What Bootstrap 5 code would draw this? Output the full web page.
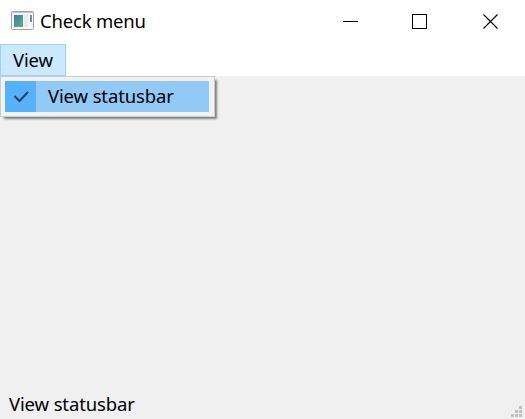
<!DOCTYPE html>
<html lang="en">
<head>
<meta charset="utf-8">
<meta name="viewport" content="width=device-width, initial-scale=1">
<title>Check menu</title>
<link href="https://cdn.jsdelivr.net/npm/bootstrap@5.3.0/dist/css/bootstrap.min.css" rel="stylesheet">
<style>
body{font-family:"Noto Sans","Open Sans",sans-serif;font-size:18.5px;line-height:30px;color:#000;background:#f0f0f0;letter-spacing:-.13px}
svg{display:block;flex:none}
.title-bar{height:44px;padding-left:10px;padding-right:26px}
.title-icon{margin-bottom:3px}
.title-text{margin-left:6px;margin-top:-2px;letter-spacing:-.2px}
.win-controls{gap:54px}
.menu-bar{height:32px}
.menu-btn{width:66px;height:32px;border:1px solid #99d1ff;background:#cce8ff;padding-left:12px}
.menu-popup{top:32px;left:0;width:215px;height:41px;padding:4px;border:1px solid #ccc;background:#f2f2f2;box-shadow:3px 3px 2px -1px #808080}
.menu-row{width:204px;height:31px;background:#91c9f7}
.check-cell{width:31px;height:31px;background:#56b0fa}
.menu-label{padding-left:12px}
.status-bar{height:30px;padding-left:9px;padding-right:3px}
</style>
<script src="https://cdn.jsdelivr.net/npm/bootstrap@5.3.0/dist/js/bootstrap.bundle.min.js"></script>
</head>
<body class="vh-100 d-flex flex-column overflow-hidden">
<header class="title-bar bg-white d-flex align-items-center">
  <svg class="title-icon" width="24" height="21" viewBox="0 0 24 21">
    <defs><linearGradient id="pane" x1="0" y1="0" x2="1" y2="1"><stop offset="0" stop-color="#4279ac"/><stop offset="1" stop-color="#55b37c"/></linearGradient></defs>
    <rect x="1.5" y="1.5" width="22" height="18" rx="1" fill="#f5f6f7" stroke="#a0a1a6"/>
    <path d="M2 2.5h21" stroke="#c5c9ce"/>
    <rect x="4" y="5" width="9" height="12" fill="url(#pane)"/>
    <rect x="14" y="5" width="4" height="12" fill="#e9eaec"/>
    <rect x="20" y="5" width="2" height="7" fill="#5b9a9c"/>
  </svg>
  <span class="title-text">Check menu</span>
  <div class="win-controls d-flex ms-auto">
    <svg width="15" height="16" shape-rendering="crispEdges"><path d="M0 7.5h15" stroke="#000"/></svg>
    <svg width="16" height="16" shape-rendering="crispEdges"><rect x=".5" y=".5" width="14" height="14" fill="none" stroke="#000"/></svg>
    <svg width="17" height="16"><path d="M1.5 .5l14 14M15.5 .5L1.500 14.5" stroke="#000" stroke-width="1.1"/></svg>
  </div>
</header>
<nav class="menu-bar bg-white position-relative">
  <div class="menu-btn">View</div>
  <div class="menu-popup position-absolute">
    <div class="menu-row d-flex">
      <div class="check-cell d-flex align-items-center justify-content-center">
        <svg width="18" height="14"><path d="M2.500 6l5 5 8.500-9" fill="none" stroke="#24435c" stroke-width="2"/></svg>
      </div>
      <span class="menu-label">View statusbar</span>
    </div>
  </div>
</nav>
<main class="flex-grow-1"></main>
<footer class="status-bar d-flex justify-content-between align-items-end">
  <span>View statusbar</span>
  <svg width="11" height="13" fill="#bfbfbf" shape-rendering="crispEdges"><path d="M8 0h3v3h-3zM4 4h3v3h-3zM8 4h3v3h-3zM0 8h3v3h-3zM4 8h3v3h-3zM8 8h3v3h-3z"/></svg>
</footer>
</body>
</html>
